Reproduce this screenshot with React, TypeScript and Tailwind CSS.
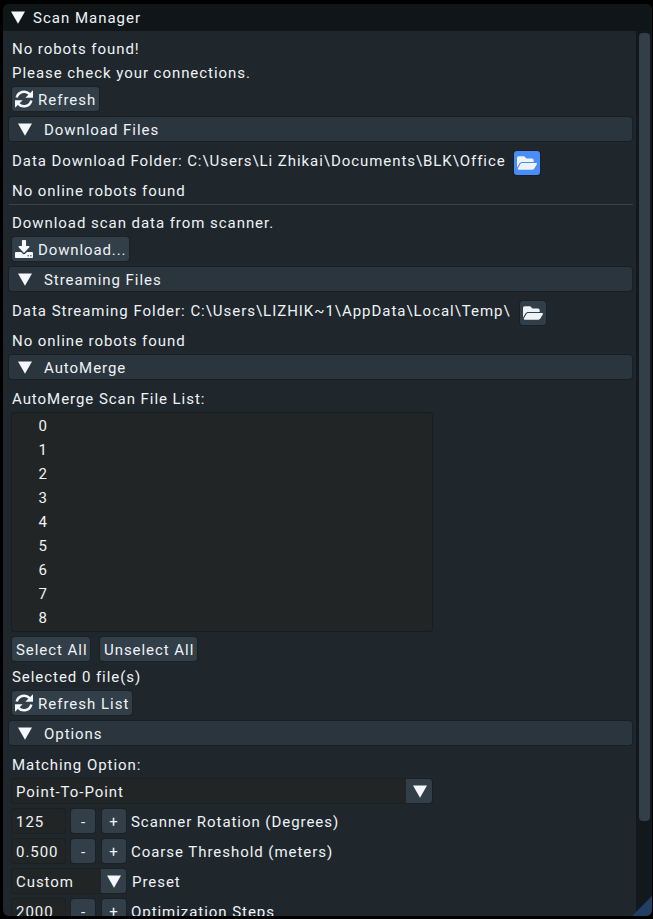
import React from "react";
import { FaFolderOpen } from "react-icons/fa";

const Tri = () => (
  <svg width="14" height="13" viewBox="0 0 14 13" className="shrink-0 fill-[#f4f8fc]">
    <path d="M0 0.5H14L7 12.7Z" />
  </svg>
);

const RefreshIcon = () => (
  <svg width="18" height="18" viewBox="0 0 18 18" className="shrink-0">
    <g fill="none" stroke="#f4f8fc" strokeWidth="2.5">
      <path d="M1.7 7.6A7.5 7.5 0 0 1 14.6 4.2" />
      <path d="M16.3 10.4A7.5 7.5 0 0 1 3.4 13.8" />
    </g>
    <path d="M18 0.2V7.7H10.3Z" fill="#f4f8fc" />
    <path d="M0 17.8V10.3H7.7Z" fill="#f4f8fc" />
  </svg>
);

const DownloadIcon = () => (
  <svg width="18" height="18" viewBox="0 -128 1664 1536" preserveAspectRatio="none" className="shrink-0 fill-[#f4f8fc]">
    <path d="M1280 1216q0-26-19-45t-45-19-45 19-19 45 19 45 45 19 45-19 19-45zm256 0q0-26-19-45t-45-19-45 19-19 45 19 45 45 19 45-19 19-45zm128-224v320q0 40-28 68t-68 28H96q-40 0-68-28t-28-68V992q0-40 28-68t68-28h465l135 136q58 56 136 56t136-56l136-136h464q40 0 68 28t28 68zm-325-569q17 41-14 70l-448 448q-18 19-45 19t-45-19L339 493q-31-29-14-70 17-39 59-39h256V-64q0-26 19-45t45-19h256q26 0 45 19t19 45v448h256q42 0 59 39z" />
  </svg>
);

const Label = ({ children, className = "" }: { children: React.ReactNode; className?: string }) => (
  <div className={`flex h-6 items-center ${className}`}>{children}</div>
);

const Btn = ({ children, className = "" }: { children: React.ReactNode; className?: string }) => (
  <button className={`flex h-6 shrink-0 items-center rounded-[3px] bg-[#323e48] shadow-[0_0_0_1px_#192126] ${className}`}>
    {children}
  </button>
);

const Header = ({ title, className = "" }: { title: string; className?: string }) => (
  <div className={`-ml-[3px] flex h-6 w-[623px] items-center gap-[12px] rounded-[3px] bg-[#2b353d] pl-[9px] shadow-[0_0_0_1px_#182026] ${className}`}>
    <Tri />
    <span className="pt-0.5">{title}</span>
  </div>
);

const Stepper = ({ value, label }: { value: string; label: string }) => (
  <div className="mt-1.5 flex h-6 shrink-0 items-center">
    <div className="flex h-6 w-[53px] items-center rounded-[3px] bg-[#222525] pl-1 pt-0.5 shadow-[0_0_0_1px_#1a2024]">{value}</div>
    <Btn className="ml-1.5 w-6 justify-center pl-px pt-0.5">-</Btn>
    <Btn className="ml-[7px] w-6 justify-center pt-0.5">+</Btn>
    <span className="ml-[5px] pt-0.5">{label}</span>
  </div>
);

export default function App() {
  return (
    <div className="h-[919px] w-[653px] overflow-hidden bg-black pl-[3px] pt-1 font-['Roboto',sans-serif] text-[15px] leading-6 tracking-[0.95px] whitespace-pre text-[#eef3f7]">
      <div className="relative flex h-[912px] w-[649px] flex-col overflow-hidden rounded-[6px] bg-[#1f262c]">
        <div className="flex h-[27px] shrink-0 items-center gap-2 bg-[#101517] pl-2 tracking-[1px]">
          <Tri />
          <span>Scan Manager</span>
        </div>
        <div className="flex min-h-0 flex-1">
          <div className="flex w-[633px] flex-col overflow-hidden pl-[9px] pt-[6px] *:shrink-0">
            <Label>No robots found!</Label>
            <Label>Please check your connections.</Label>
            <Btn className="mt-[2px] w-[87px] gap-[5px] pl-[3px]">
              <RefreshIcon />
              <span className="pt-0.5 tracking-[1px]">Refresh</span>
            </Btn>
            <Header title="Download Files" className="mt-1.5" />
            <div className="mt-2 flex h-6">
              <Label className="tracking-[0.94px]">{"Data Download Folder: C:\\Users\\Li Zhikai\\Documents\\BLK\\Office"}</Label>
              <button className="ml-2 mt-0.5 flex h-6 w-[26px] items-center justify-center rounded-[3px] bg-[#4a8df8] shadow-[0_0_0_1px_#192126]">
                <FaFolderOpen size={20} />
              </button>
            </div>
            <Label className="mt-1.5">No online robots found</Label>
            <div className="-ml-[3px] mt-px h-px w-[624px] bg-[#3a434a]" />
            <Label className="mt-1.5">Download scan data from scanner.</Label>
            <Btn className="mt-[2px] w-[117px] gap-[5px] pl-[3px]">
              <DownloadIcon />
              <span className="pt-0.5 tracking-[0.88px]">Download...</span>
            </Btn>
            <Header title="Streaming Files" className="mt-1.5" />
            <div className="mt-2 flex h-6">
              <Label className="tracking-[0.97px]">{"Data Streaming Folder: C:\\Users\\LIZHIK~1\\AppData\\Local\\Temp\\"}</Label>
              <Btn className="ml-[9.5px] mt-0.5 w-[26px] justify-center">
                <FaFolderOpen size={20} />
              </Btn>
            </div>
            <Label className="mt-1.5">No online robots found</Label>
            <Header title="AutoMerge" className="mt-[2px]" />
            <Label className="mt-2">AutoMerge Scan File List:</Label>
            <div className="mt-[2px] h-[218px] w-[420px] rounded-[3px] bg-[#222525] pl-[26.5px] pt-px shadow-[0_0_0_1px_#181d20]">
              {[0, 1, 2, 3, 4, 5, 6, 7, 8].map((n) => (
                <Label key={n}>{n}</Label>
              ))}
            </div>
            <div className="mt-1.5 flex gap-2.5">
              <Btn className="w-[78px] pl-1 pt-0.5">Select All</Btn>
              <Btn className="w-[97px] pl-1 pt-0.5">Unselect All</Btn>
            </div>
            <Label className="mt-1">Selected 0 file(s)</Label>
            <Btn className="mt-[2px] w-[120px] gap-[5px] pl-[3px]">
              <RefreshIcon />
              <span className="pt-0.5 tracking-[1px]">Refresh List</span>
            </Btn>
            <Header title="Options" className="mt-1.5" />
            <Label className="mt-2">Matching Option:</Label>
            <div className="mt-[2px] flex h-6 w-[420px] overflow-hidden rounded-[3px] bg-[#222525] shadow-[0_0_0_1px_#1a2024]">
              <span className="flex-1 pl-1 pt-px">Point-To-Point</span>
              <div className="flex w-[26px] items-center justify-center bg-[#323e48] pl-px">
                <Tri />
              </div>
            </div>
            <Stepper value="125" label="Scanner Rotation (Degrees)" />
            <Stepper value="0.500" label="Coarse Threshold (meters)" />
            <div className="mt-1.5 flex h-6">
              <div className="flex w-[114px] overflow-hidden rounded-[3px] bg-[#222525] shadow-[0_0_0_1px_#1a2024]">
                <span className="flex-1 pl-1 pt-px">Custom</span>
                <div className="flex w-[25px] items-center justify-center bg-[#323e48]">
                  <Tri />
                </div>
              </div>
              <span className="ml-1.5 pt-px">Preset</span>
            </div>
            <Stepper value="2000" label="Optimization Steps" />
          </div>
          <div className="w-4 bg-[#13181d] pl-[3px] pt-[2px]">
            <div className="h-[788px] w-[11px] rounded-[4px] bg-[#323e48]" />
          </div>
        </div>
        <svg width="20" height="20" viewBox="0 0 20 20" className="absolute bottom-0 right-0 fill-[#213f62]">
          <path d="M20 0V20H0Z" />
        </svg>
      </div>
    </div>
  );
}
